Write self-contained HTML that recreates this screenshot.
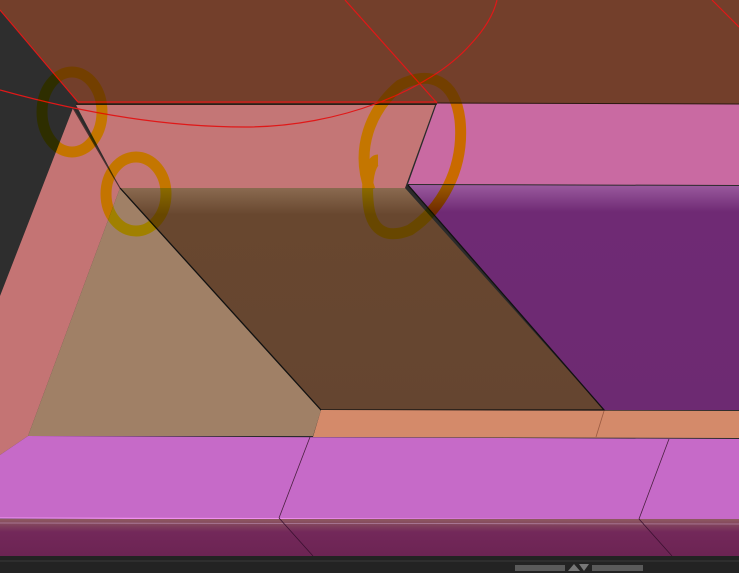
<!DOCTYPE html>
<html><head><meta charset="utf-8"><style>html,body{margin:0;padding:0;background:#2b2b2b;overflow:hidden}svg{display:block}</style></head>
<body>
<svg width="739" height="573" viewBox="0 0 739 573" xmlns="http://www.w3.org/2000/svg">
<defs>
<linearGradient id="bg1" x1="0" y1="0" x2="0" y2="1">
<stop offset="0" stop-color="#8e5a60"/><stop offset="0.35" stop-color="#73285a"/><stop offset="1" stop-color="#6c2453"/>
</linearGradient>
<linearGradient id="br" x1="0" y1="0" x2="0" y2="1">
<stop offset="0" stop-color="#8a6a50"/><stop offset="0.12" stop-color="#68472f"/><stop offset="1" stop-color="#654530"/>
</linearGradient>
<linearGradient id="pu" x1="0" y1="0" x2="0" y2="1">
<stop offset="0" stop-color="#9a5a9e"/><stop offset="0.12" stop-color="#6f2a74"/><stop offset="1" stop-color="#6d2a72"/>
</linearGradient>
</defs>
<rect width="739" height="573" fill="#2b2b2b"/>
<rect x="0" y="0" width="739" height="104" fill="#733f2b"/>
<polygon points="0,10 78,103 73,108 0,296" fill="#2e2e2e"/>
<polygon points="73,108 120,188 28,436 0,455 0,296" fill="#c47474"/>
<polygon points="76,105 435,105 405,188 120,188" fill="#c47676"/>
<polygon points="437,103 739,104 739,185 408,184" fill="#c96aa2"/>
<polygon points="408,185 739,186 739,410 604,410" fill="url(#pu)"/>
<polygon points="120,188 321,410 313,436 28,436" fill="#a08066"/>
<polygon points="120,188 405,188 604,410 321,410" fill="url(#br)"/>
<polyline points="120,188 321,410 604,410 408,185" fill="none" stroke="#111" stroke-width="1.3"/>
<line x1="73" y1="108" x2="120" y2="188" stroke="#4a3030" stroke-width="1.2"/>
<line x1="76" y1="104" x2="437" y2="104" stroke="#2a1810" stroke-width="1.2"/>
<line x1="437" y1="103" x2="739" y2="104" stroke="#2a1810" stroke-width="1"/>
<polygon points="321,410 739,411 739,438 313,437" fill="#d48a6a"/>
<line x1="604" y1="411" x2="596" y2="437" stroke="#9a5a40" stroke-width="0.8"/>
<polygon points="28,436 739,439 739,520 0,518 0,455" fill="#c66ac8"/>
<line x1="0" y1="518" x2="739" y2="520" stroke="#f090f0" stroke-width="1.3"/>
<line x1="310" y1="437" x2="279" y2="518" stroke="#4a2040" stroke-width="0.8"/>
<line x1="669" y1="439" x2="639" y2="519" stroke="#4a2040" stroke-width="0.8"/>
<rect x="0" y="519" width="739" height="37" fill="url(#bg1)"/>
<line x1="0" y1="523" x2="739" y2="524" stroke="#b080a0" stroke-width="0.8"/>
<line x1="279" y1="518" x2="313" y2="556" stroke="#3a1030" stroke-width="0.8"/>
<line x1="639" y1="519" x2="672" y2="556" stroke="#3a1030" stroke-width="0.8"/>
<rect x="0" y="556" width="739" height="17" fill="#232323"/>
<line x1="0" y1="561" x2="739" y2="561" stroke="#3a3a3a" stroke-width="1"/>
<rect x="515" y="565" width="50" height="6" fill="#5a5a5a"/>
<rect x="592" y="565" width="51" height="6" fill="#5a5a5a"/>
<polygon points="568,571 574,564 580,571" fill="#777"/>
<polygon points="579,564 589,564 584,571" fill="#777"/>
<g fill="none" stroke="#e01818" stroke-width="1.2">
<line x1="0" y1="10" x2="78" y2="102"/>
<line x1="78" y1="102" x2="437" y2="102"/>
<line x1="345" y1="0" x2="437" y2="103"/>
<line x1="712" y1="0" x2="739" y2="27"/>
<path d="M0,90 C90,115 170,127 245,127 C340,127 430,90 470,45 C486,28 494,13 497,0"/>
</g>
<g fill="none" stroke="#ffff00" stroke-width="11" style="mix-blend-mode:multiply">
<ellipse cx="72" cy="112" rx="30" ry="40"/>
<ellipse cx="136" cy="194" rx="30" ry="37"/>
<path d="M370,190 C355,150 370,110 400,85 C430,70 455,80 460,120 C465,170 440,210 410,230 C385,240 370,230 368,200 C366,175 372,160 378,160"/>
</g>
</svg>
</body></html>
